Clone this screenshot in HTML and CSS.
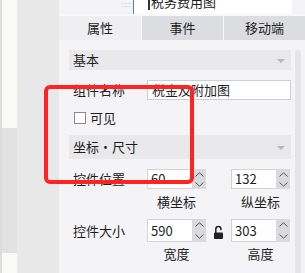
FILE: index.html
```html
<!DOCTYPE html>
<html lang="zh-CN">
    <head>
        <meta charset="UTF-8" />
        <meta name="viewport" content="width=device-width, initial-scale=1.0" />
        <title>属性面板</title>
        <link rel="stylesheet" href="styles.css">
    </head>
    <body>
        <div class="app">
            <!-- left rail of the designer -->
            <aside class="rail">
                <div class="rail-line"></div>
                <div class="rail-col">
                    <div class="rail-seg"></div>
                    <div class="rail-seg dark"></div>
                    <div class="rail-seg"></div>
                </div>
                <div class="rail-edge"></div>
                <div class="rail-wide"></div>
            </aside>

            <main class="panel">
                <!-- tail of the row above the tabs -->
                <div class="prev-row">
                    <span class="prev-mark"></span>
                    <div class="prev-input"><span class="prev-text">税务费用图</span></div>
                </div>

                <div class="tabs">
                    <div class="tab active">属性</div>
                    <div class="tab">事件</div>
                    <div class="tab">移动端</div>
                </div>

                <div class="body">
                    <div class="content">
                        <div class="section">
                            <span>基本</span>
                            <span class="caret"></span>
                        </div>

                        <div class="row name-row">
                            <label class="label">组件名称</label>
                            <div class="text-input wide">税金及附加图</div>
                        </div>

                        <div class="check-row">
                            <span class="checkbox"></span>
                            <span>可见</span>
                        </div>

                        <div class="section tall">
                            <span>坐标・尺寸</span>
                            <span class="caret"></span>
                        </div>

                        <div class="row pos-row">
                            <label class="label">控件位置</label>
                            <div class="spin">
                                <div class="spin-value">60</div>
                                <div class="spin-btns">
                                    <span><svg width="9" height="5" viewBox="0 0 9 5"><polyline points="0.5,4.5 4.5,0.8 8.5,4.5" /></svg></span>
                                    <span><svg width="9" height="5" viewBox="0 0 9 5"><polyline points="0.5,0.5 4.5,4.2 8.5,0.5" /></svg></span>
                                </div>
                            </div>
                            <span></span>
                            <div class="spin">
                                <div class="spin-value">132</div>
                                <div class="spin-btns">
                                    <span><svg width="9" height="5" viewBox="0 0 9 5"><polyline points="0.5,4.5 4.5,0.8 8.5,4.5" /></svg></span>
                                    <span><svg width="9" height="5" viewBox="0 0 9 5"><polyline points="0.5,0.5 4.5,4.2 8.5,0.5" /></svg></span>
                                </div>
                            </div>
                        </div>
                        <div class="row captions">
                            <span></span>
                            <span class="caption">横坐标</span>
                            <span></span>
                            <span class="caption">纵坐标</span>
                        </div>

                        <div class="row size-row">
                            <label class="label">控件大小</label>
                            <div class="spin">
                                <div class="spin-value">590</div>
                                <div class="spin-btns">
                                    <span><svg width="9" height="5" viewBox="0 0 9 5"><polyline points="0.5,4.5 4.5,0.8 8.5,4.5" /></svg></span>
                                    <span><svg width="9" height="5" viewBox="0 0 9 5"><polyline points="0.5,0.5 4.5,4.2 8.5,0.5" /></svg></span>
                                </div>
                            </div>
                            <span class="lock">
                                <svg width="9" height="14" viewBox="0 0 9 14">
                                    <path d="M1.8 8 V4.2 a2.6 2.6 0 0 1 5.2 0 V5.2" fill="none" stroke="#222" stroke-width="1.5" />
                                    <rect x="0" y="7.5" width="9" height="6.5" rx="1" fill="#222" />
                                </svg>
                            </span>
                            <div class="spin">
                                <div class="spin-value">303</div>
                                <div class="spin-btns">
                                    <span><svg width="9" height="5" viewBox="0 0 9 5"><polyline points="0.5,4.5 4.5,0.8 8.5,4.5" /></svg></span>
                                    <span><svg width="9" height="5" viewBox="0 0 9 5"><polyline points="0.5,0.5 4.5,4.2 8.5,0.5" /></svg></span>
                                </div>
                            </div>
                        </div>
                        <div class="row captions last">
                            <span></span>
                            <span class="caption">宽度</span>
                            <span></span>
                            <span class="caption">高度</span>
                        </div>
                    </div>
                    <div class="scrollbar"></div>
                </div>
            </main>

            <!-- red annotation box drawn over the panel -->
            <div class="highlight"></div>
        </div>
    </body>
</html>
```

FILE: styles.css
```css
* {
    box-sizing: border-box;
}
body {
    margin: 0;
    font-family: "Noto Sans CJK SC", "Noto Sans", sans-serif;
    font-size: 13px;
    line-height: 16px;
    color: #1e1e1e;
    background: #f4f4f6;
}
.app {
    position: relative;
    display: flex;
    width: 305px;
    height: 273px;
    overflow: hidden;
}

/* left rail */
.rail {
    display: flex;
    width: 59px;
    flex-shrink: 0;
}
.rail-line {
    width: 2px;
    background: #dcdcdc;
}
.rail-col {
    display: flex;
    flex-direction: column;
    width: 15px;
}
.rail-seg {
    height: 128px;
    background: #f9f9f7;
}
.rail-seg.dark {
    height: 125px;
    background: #e2e2e2;
}
.rail-seg:last-child {
    flex: 1;
}
.rail-edge {
    width: 2px;
    background: #ece9e4;
}
.rail-wide {
    flex: 1;
    background: #e8e8e8;
}

/* panel */
.panel {
    flex: 1;
    display: flex;
    flex-direction: column;
    background: #f4f4f6;
}
.prev-row {
    display: flex;
    align-items: flex-start;
    height: 16px;
    padding-bottom: 2px;
    border-bottom: 2px solid #f8f8fa;
}
.prev-mark {
    width: 10px;
    height: 4px;
    margin: 3px 0 0 62px;
    border-top: 1px solid #e2e2e4;
    border-bottom: 1px solid #e2e2e4;
}
.prev-input {
    width: 159px;
    height: 14px;
    margin-left: 2px;
    padding-left: 14px;
    background: #fff;
    border-left: 1px solid #5a7fc0;
    overflow: hidden;
}
.prev-text {
    display: block;
    margin-top: -6px;
    line-height: 16px;
    border-left: 2px solid #333;
    padding-left: 1px;
}

.tabs {
    display: flex;
    height: 24px;
}
.tab {
    flex: 1;
    display: flex;
    align-items: center;
    justify-content: center;
    background: #dcdde1;
    border-left: 1px solid #f6f6f8;
}
.tab.active {
    flex: 0 0 82px;
    background: #efeff2;
    border-left: none;
}

.body {
    flex: 1;
    display: flex;
    padding: 10px 0 0 10px;
}
.content {
    width: 222px;
}
.scrollbar {
    width: 6px;
    margin-left: 4px;
    border-radius: 3px 3px 0 0;
    background: #e5e5e7;
}

.section {
    display: flex;
    align-items: center;
    justify-content: space-between;
    height: 20px;
    padding: 0 6px 0 4px;
    background: #e9e9ec;
}
.section.tall {
    height: 24px;
    margin-top: 5px;
}
.caret {
    width: 0;
    height: 0;
    margin-top: 2px;
    border-left: 4px solid transparent;
    border-right: 4px solid transparent;
    border-top: 4px solid #b8b8bb;
}

.row {
    display: grid;
    grid-template-columns: 78px 59px 25px 59px;
    align-items: center;
}
.label {
    padding-left: 4px;
}
.name-row {
    margin-top: 10px;
}
.text-input {
    height: 20px;
    padding-left: 4px;
    line-height: 18px;
    background: #fff;
    border: 1px solid #cfcfd2;
}
.text-input.wide {
    grid-column: 2 / 5;
    margin-right: -1px;
}

.check-row {
    display: flex;
    align-items: center;
    gap: 4px;
    height: 25px;
    margin-top: 5px;
    padding-left: 5px;
}
.checkbox {
    width: 12px;
    height: 12px;
    background: #fff;
    border: 1px solid #8a8a8a;
}

.pos-row {
    margin-top: 10px;
}
.spin {
    display: flex;
    height: 20px;
}
.size-row {
    margin-top: 9px;
}
.size-row .spin {
    height: 23px;
}
.spin-value {
    flex: 1;
    padding-left: 3px;
    display: flex;
    align-items: center;
    background: #fff;
    border: 1px solid #d4d4d6;
    border-right: none;
}
.spin-btns {
    width: 14px;
    display: flex;
    flex-direction: column;
    background: #dadadc;
}
.spin-btns span {
    flex: 1;
    display: flex;
    align-items: center;
    justify-content: center;
}
.spin-btns polyline {
    fill: none;
    stroke: #555;
    stroke-width: 1;
}
.lock {
    display: flex;
    justify-content: center;
    padding-top: 2px;
}
.captions {
    height: 16px;
    margin-top: 5px;
}
.captions.last {
    margin-top: 4px;
}
.caption {
    text-align: center;
}

.highlight {
    position: absolute;
    left: 44px;
    top: 85px;
    width: 150px;
    height: 99px;
    border: 4px solid #ff2323;
    border-radius: 6px;
}
```
